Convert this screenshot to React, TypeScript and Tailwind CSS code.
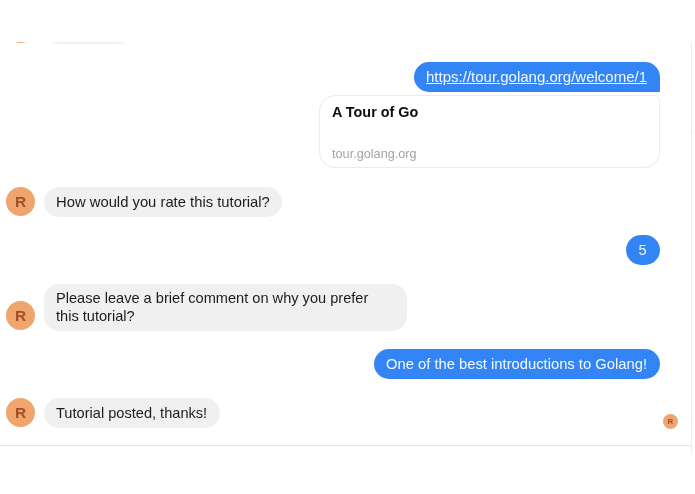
const font = "font-['Liberation_Sans',Arial,sans-serif]";

function Avatar({ letter = "R" }: { letter?: string }) {
  return (
    <div className="mb-px flex h-[29px] w-[29px] shrink-0 items-center justify-center rounded-full bg-[#f0a56f] text-[15.5px] font-bold text-[#a04f28]">
      {letter}
    </div>
  );
}

function Incoming({ children, className = "", size = "text-[14.6px]" }: { children: React.ReactNode; className?: string; size?: string }) {
  return (
    <div className={`flex items-end gap-[9px] pl-[6px] ${className}`}>
      <Avatar />
      <div className={`rounded-[15px] bg-[#f0f0f0] px-3 py-[6px] leading-[18px] text-[#1c1c1c] ${size}`}>
        {children}
      </div>
    </div>
  );
}

function Outgoing({ children, className = "", size = "text-[14.6px]", corner = "rounded-[15px]" }: { children: React.ReactNode; className?: string; size?: string; corner?: string }) {
  return (
    <div className={`flex justify-end pr-[31px] ${className}`}>
      <div className={`bg-[#3385f6] py-[6px] pr-[13px] pl-3 leading-[18px] text-[#f4f8ff] ${corner} ${size}`}>
        {children}
      </div>
    </div>
  );
}

export default function App() {
  return (
    <div className={`h-[494px] w-[695px] overflow-hidden bg-white pt-[42px] blur-[0.35px] ${font}`}>
      <div className="relative h-[410px] w-[692px] border-r border-[#ececec]">
        <div className="absolute top-[90px] left-[691px] h-px w-[3px] bg-[#ececec]" />
        <div className="relative h-[404px] overflow-hidden border-b border-[#e6e6e6]">
          <div className="-mt-[28px] flex flex-col">
            <div className="flex h-[30px] items-end gap-[9px] pl-[6px]">
              <Avatar letter="" />
              <div className="h-[30px] w-[89px] rounded-[15px] bg-[#f0f0f0]" />
            </div>

            <Outgoing
              className="mt-[18px]"
              size="text-[15px]"
              corner="rounded-tl-[15px] rounded-tr-[15px] rounded-br-[1px] rounded-bl-[15px]"
            >
              <a className="underline underline-offset-1">https://tour.golang.org/welcome/1</a>
            </Outgoing>

            <div className="mt-[3px] flex justify-end pr-[31px]">
              <div className="flex h-[73px] w-[341px] flex-col justify-between rounded-tl-[16px] rounded-tr-[5px] rounded-br-[16px] rounded-bl-[16px] border border-[#ebebeb] px-3 pt-[7px] pb-[5px]">
                <div className="text-[14.4px] leading-[18px] font-bold text-[#0c0c0c]">A Tour of Go</div>
                <div className="text-[12.7px] leading-[16px] text-[#a3a3a3]">tour.golang.org</div>
              </div>
            </div>

            <Incoming className="mt-[19px]" size="text-[14.8px]">How would you rate this tutorial?</Incoming>

            <Outgoing className="mt-[18px]">
              <span className="block w-[9px] text-center">5</span>
            </Outgoing>

            <Incoming className="mt-[19px]">
              <span className="block w-[339px] leading-[17.5px]">Please leave a brief comment on why you prefer this tutorial?</span>
            </Incoming>

            <Outgoing className="mt-[18px]" size="text-[14.77px]">One of the best introductions to Golang!</Outgoing>

            <Incoming className="mt-[19px]" size="pr-[13px] text-[14.6px]">Tutorial posted, thanks!</Incoming>
          </div>
          <div className="absolute top-[372px] left-[663px] flex h-[15px] w-[15px] items-center justify-center rounded-full bg-[#f0a56f] text-[8px] font-bold text-[#a04f28]">
            R
          </div>
        </div>
      </div>
    </div>
  );
}
